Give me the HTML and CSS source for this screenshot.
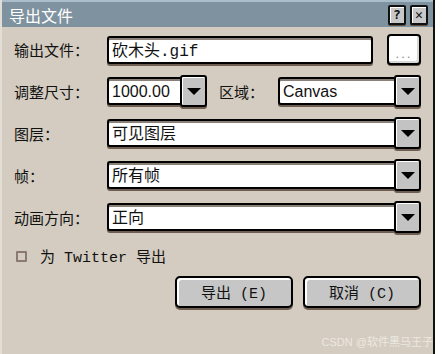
FILE: index.html
```html
<!DOCTYPE html>
<html lang="zh">
<head>
  <meta charset="UTF-8" />
  <title>导出文件</title>
  <link rel="stylesheet" href="styles.css">
</head>
<body>
  <div class="dialog">
    <div class="titlebar">
      <span class="title">导出文件</span>
      <div class="tb-btns">
        <span class="tb-btn">?</span>
        <span class="tb-btn">✕</span>
      </div>
    </div>

    <div class="content">
      <div class="form">
        <label>输出文件：</label>
        <div class="row">
          <div class="field grow">砍木头<span class="mono">.gif</span></div>
          <button class="browse">...</button>
        </div>

        <label>调整尺寸：</label>
        <div class="row">
          <div class="combo size">
            <div class="field grow">1000.00</div>
            <span class="drop"><i></i></span>
          </div>
          <span class="sublabel">区域：</span>
          <div class="combo grow">
            <div class="field grow">Canvas</div>
            <span class="drop"><i></i></span>
          </div>
        </div>

        <label>图层：</label>
        <div class="combo">
          <div class="field grow">可见图层</div>
          <span class="drop"><i></i></span>
        </div>

        <label>帧：</label>
        <div class="combo">
          <div class="field grow">所有帧</div>
          <span class="drop"><i></i></span>
        </div>

        <label>动画方向：</label>
        <div class="combo">
          <div class="field grow">正向</div>
          <span class="drop"><i></i></span>
        </div>
      </div>

      <div class="check">
        <span class="box"></span>
        <span class="mono">为 Twitter 导出</span>
      </div>

      <div class="actions">
        <button class="btn">导出 (E)</button>
        <button class="btn">取消 (C)</button>
      </div>
    </div>

    <div class="watermark">CSDN @软件黑马王子</div>
  </div>
</body>
</html>
```

FILE: styles.css
```css
body { margin: 0; background: #fff; font-family: "Liberation Sans", "Noto Sans CJK SC", sans-serif; color: #111; }
.mono { font-family: "Liberation Mono", "Noto Sans CJK SC", monospace; }
.dialog { position: relative; width: 431px; height: 354px; background: #d4ccc0; border-left: 2px solid #e2ddd5; border-right: 2px solid #111; }

.titlebar { height: 25px; border-top: 2px solid #aabdcb; background: #7f929f; display: flex; align-items: center; justify-content: space-between; padding: 0 5px 0 7px; }
.title { color: #fff; font-size: 16px; }
.tb-btns { display: flex; gap: 4px; }
.tb-btn { width: 14px; height: 16px; border: 2px solid #111; border-radius: 2px; background: #c8c8c8; box-shadow: inset 1px 1px 0 #fff, 0 1px 0 #5b4e44; font: bold 13px/16px "DejaVu Sans Mono", monospace; text-align: center; }

.content { padding: 7px 12px 0 12px; }
.form { display: grid; grid-template-columns: 93px 1fr; row-gap: 10px; align-items: center; }
.form label, .sublabel { font-size: 15px; }
.row { display: flex; align-items: center; }
.grow { flex: 1; }

.field { height: 24px; border: 2px solid #000; border-radius: 3px; background: #fff; box-shadow: inset 0 2px 0 #8a8078, 0 2px 0 #6e5e52; padding: 0 3px; font-size: 16px; line-height: 26px; white-space: nowrap; overflow: hidden; }
.browse { width: 34px; height: 31px; margin-left: 14px; border: 2px solid #000; border-radius: 4px; background: #fff; box-shadow: inset -2px -2px 0 #d8d8d8, 0 1px 0 #5b4e44; color: #888; font-size: 13px; letter-spacing: 2px; padding: 8px 0 0; }

.combo { display: flex; align-items: center; height: 32px; }
.combo .field { border-right: none; border-radius: 3px 0 0 3px; }
.size { width: 100px; }
.sublabel { margin: 0 14px 0 12px; }
.drop { width: 23px; height: 28px; border: 2px solid #000; border-radius: 3px; background: #c3c3c3; box-shadow: inset 1px 1px 0 #fff, 0 2px 0 #6e5e52; display: flex; align-items: center; justify-content: center; }
.drop i { width: 0; height: 0; border-left: 7px solid transparent; border-right: 7px solid transparent; border-top: 7px solid #000; }

.check { display: flex; align-items: center; gap: 13px; margin: 12px 0 0 2px; font-size: 15px; }
.box { width: 7px; height: 7px; border: 2px solid #8a7b6e; border-radius: 1px; }

.actions { display: flex; justify-content: flex-end; gap: 10px; margin-top: 9px; }
.btn { width: 118px; height: 32px; border: 2px solid #000; border-radius: 5px; background: #c6c6c6; box-shadow: inset 2px 2px 0 #fff, 0 2px 0 #6e5e52; font-family: "Liberation Mono", "Noto Sans CJK SC", monospace; font-size: 15px; color: #111; }

.watermark { position: absolute; right: 0; bottom: 5px; font-size: 11px; color: #ece8e2; }
```
